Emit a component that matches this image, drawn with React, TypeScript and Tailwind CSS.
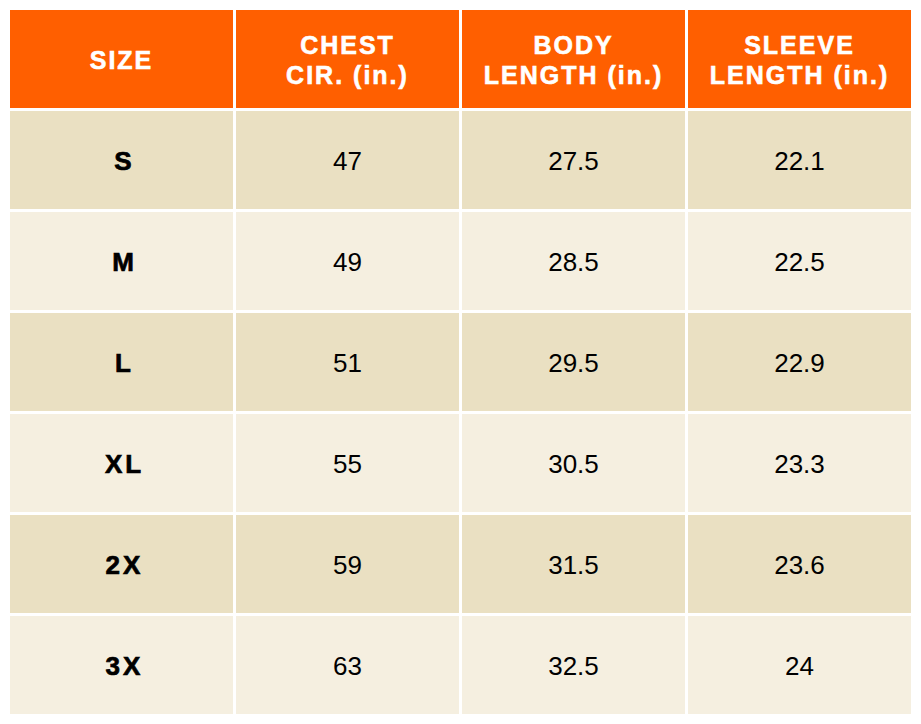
const headers = [["SIZE"], ["CHEST", "CIR. (in.)"], ["BODY", "LENGTH (in.)"], ["SLEEVE", "LENGTH (in.)"]];

const rows = [
  ["S", "47", "27.5", "22.1"],
  ["M", "49", "28.5", "22.5"],
  ["L", "51", "29.5", "22.9"],
  ["XL", "55", "30.5", "23.3"],
  ["2X", "59", "31.5", "23.6"],
  ["3X", "63", "32.5", "24"],
];

export default function App() {
  return (
    <div className="w-[921px] h-[724px] bg-white p-[10px] font-['Liberation_Sans',Arial,sans-serif]">
      <div className="w-[901px] flex flex-col gap-[3px]">
        <div className="grid grid-cols-4 gap-[3px] h-[98px]">
          {headers.map((h, i) => (
            <div
              key={i}
              className="bg-[#ff5f00] flex flex-col items-center justify-center pt-[2px] text-white font-bold text-[25px] leading-[30px] tracking-[2px] [-webkit-text-stroke:0.6px_white]"
            >
              {h.map((line) => (
                <span key={line}>{line}</span>
              ))}
            </div>
          ))}
        </div>

        {rows.map((r, idx) => (
          <div key={r[0]} className="grid grid-cols-4 gap-[3px] h-[98px]">
            {r.map((cell, i) => (
              <div
                key={i}
                className={
                  (idx % 2 === 0 ? "bg-[#eae0c2] " : "bg-[#f5efe0] ") +
                  "flex items-center justify-center text-black pt-[2px] " +
                  (i === 0
                    ? "font-bold text-[26px] tracking-[3px] pl-[6px] [-webkit-text-stroke:0.7px_black]"
                    : "text-[26px]")
                }
              >
                {cell}
              </div>
            ))}
          </div>
        ))}
      </div>
    </div>
  );
}
